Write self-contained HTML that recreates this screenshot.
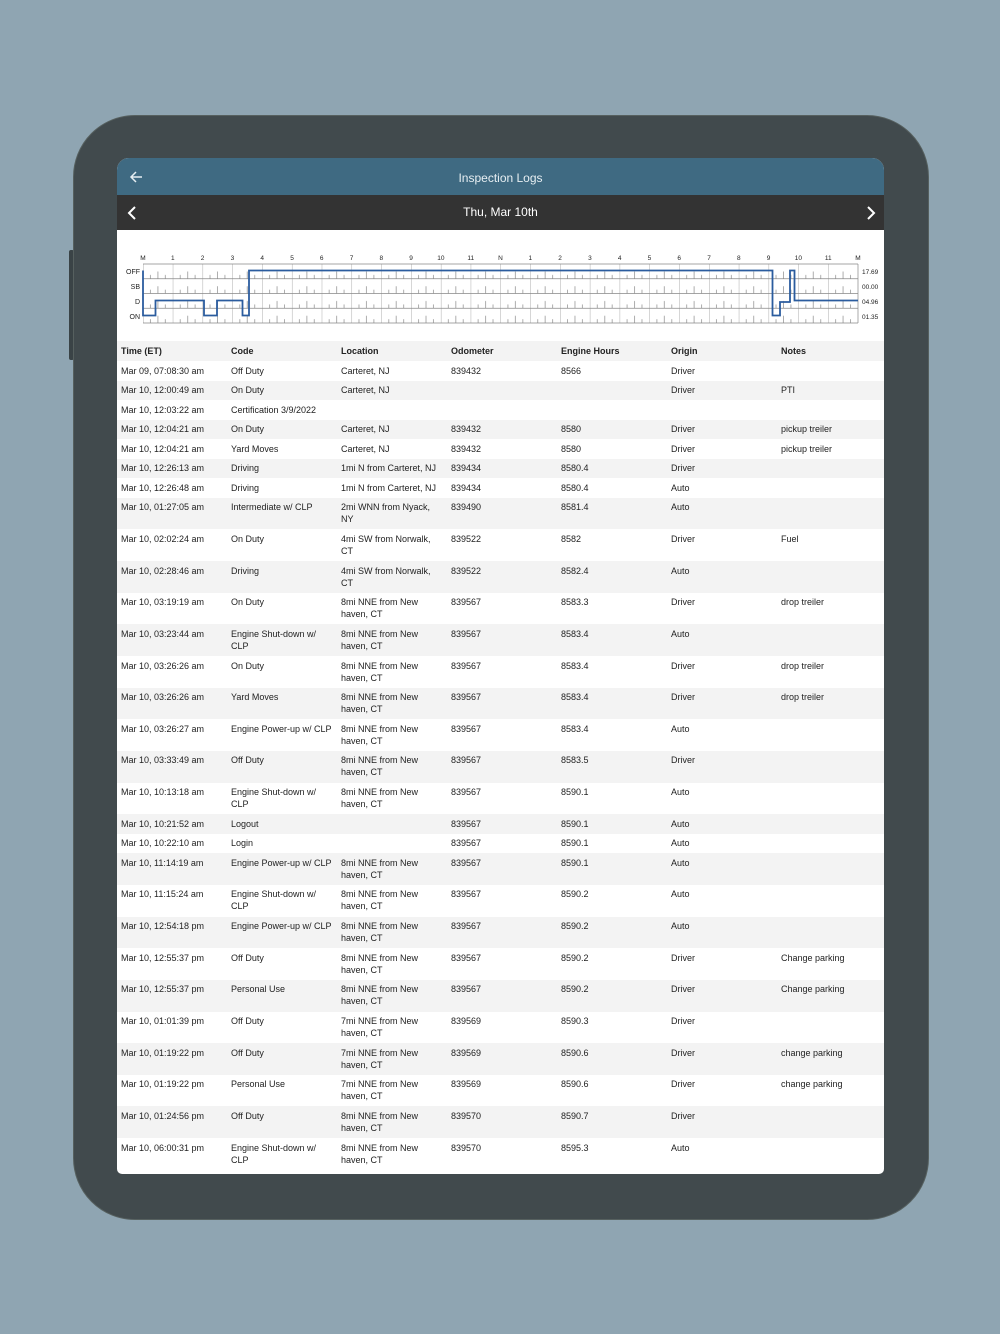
<!DOCTYPE html>
<html><head><meta charset="utf-8"><style>
*{margin:0;padding:0;box-sizing:border-box}
body{width:1000px;height:1334px;background:#8fa5b2;position:relative;font-family:"Liberation Sans",Arial,sans-serif;overflow:hidden}
.dev{position:absolute;left:73px;top:115px;width:856px;height:1105px;background:#414a4d;border-radius:62px;border:1px solid #56605f}
.btn{position:absolute;left:69px;width:5px;background:#3a4346;border-radius:2px}
.scr{position:absolute;left:117px;top:158px;width:767px;height:1016px;background:#fff;border-radius:12px 12px 5px 5px;overflow:hidden}
.tb{height:37px;background:#3f6a82;color:#e6eef2;font-size:12px;text-align:center;line-height:40px;position:relative}
.db{height:35px;background:#333;color:#fff;font-size:12px;text-align:center;line-height:35px;position:relative}
table{border-collapse:collapse;width:767px;font-size:9px;color:#222;position:absolute;top:183px;left:0;table-layout:fixed}
td,th{text-align:left;vertical-align:top;padding:3.5px 0 0 4px;line-height:12px;font-weight:normal}
th{font-weight:bold;padding-top:4px}
tr:nth-child(odd){background:#f3f3f3}
tr{height:19.55px}
tr.d{height:31.65px}
tr.h{height:20px}
col{width:110px}
</style></head><body>
<div class="btn" style="top:250px;height:110px"></div>
<div class="dev"></div>
<div class="scr">
<div class="tb">Inspection Logs
<svg style="position:absolute;left:12px;top:12px" width="14" height="14" viewBox="0 0 14 14"><path d="M13 7H2M7 2L2 7l5 5" stroke="#e6eef2" stroke-width="1.5" fill="none"/></svg></div>
<div class="db">Thu, Mar 10th
<svg style="position:absolute;left:10px;top:11px" width="10" height="14" viewBox="0 0 10 14"><path d="M8 1L2 7l6 6" stroke="#fff" stroke-width="2" fill="none"/></svg>
<svg style="position:absolute;right:8px;top:11px" width="10" height="14" viewBox="0 0 10 14"><path d="M2 1l6 6-6 6" stroke="#fff" stroke-width="2" fill="none"/></svg></div>
<svg style="position:absolute;left:0;top:72px" width="767" height="100" viewBox="117 230 767 100">
<defs><pattern id="p" patternUnits="userSpaceOnUse" x="143" y="264" width="29.79" height="14.75">
<path d="M0 0V14.75M7.45 14.75V11M14.9 14.75V7.5M22.34 14.75V11" stroke="#777" stroke-width="0.6"/>
</pattern></defs>
<rect x="143" y="264" width="715" height="59" fill="url(#p)"/>
<path d="M143 264H858M143 278.75H858M143 293.5H858M143 308.25H858M143 323H858M858 264V323" stroke="#888" stroke-width="0.7"/>
<g font-size="6.5" fill="#222" text-anchor="middle">
<text x="143" y="260">M</text><text x="172.8" y="260">1</text><text x="202.6" y="260">2</text><text x="232.4" y="260">3</text><text x="262.2" y="260">4</text><text x="292" y="260">5</text><text x="321.7" y="260">6</text><text x="351.5" y="260">7</text><text x="381.3" y="260">8</text><text x="411.1" y="260">9</text><text x="440.9" y="260">10</text><text x="470.7" y="260">11</text><text x="500.5" y="260">N</text><text x="530.3" y="260">1</text><text x="560.1" y="260">2</text><text x="589.9" y="260">3</text><text x="619.7" y="260">4</text><text x="649.4" y="260">5</text><text x="679.2" y="260">6</text><text x="709" y="260">7</text><text x="738.8" y="260">8</text><text x="768.6" y="260">9</text><text x="798.4" y="260">10</text><text x="828.2" y="260">11</text><text x="858" y="260">M</text>
</g>
<g font-size="7" fill="#222" text-anchor="end"><text x="140" y="274">OFF</text><text x="140" y="289">SB</text><text x="140" y="304">D</text><text x="140" y="319">ON</text></g>
<g font-size="6.5" fill="#222"><text x="862" y="274">17.69</text><text x="862" y="289">00.00</text><text x="862" y="304">04.96</text><text x="862" y="319">01.35</text></g>
<path d="M143 270.5V315.5H155.5V300.5H204V315.5H217V300.5H242.5V315.5H249V270.5H772.5V315.5H780V302H790V270.5H794.5V300.5H858" stroke="#2b5c9e" stroke-width="1.8" fill="none"/>
</svg>
<table>
<colgroup><col><col><col><col><col><col><col></colgroup>
<tr class="h"><th>Time (ET)</th><th>Code</th><th>Location</th><th>Odometer</th><th>Engine Hours</th><th>Origin</th><th>Notes</th></tr>
<tr><td>Mar 09, 07:08:30 am</td><td>Off Duty</td><td>Carteret, NJ</td><td>839432</td><td>8566</td><td>Driver</td><td></td></tr>
<tr><td>Mar 10, 12:00:49 am</td><td>On Duty</td><td>Carteret, NJ</td><td></td><td></td><td>Driver</td><td>PTI</td></tr>
<tr><td>Mar 10, 12:03:22 am</td><td>Certification 3/9/2022</td><td></td><td></td><td></td><td></td><td></td></tr>
<tr><td>Mar 10, 12:04:21 am</td><td>On Duty</td><td>Carteret, NJ</td><td>839432</td><td>8580</td><td>Driver</td><td>pickup treiler</td></tr>
<tr><td>Mar 10, 12:04:21 am</td><td>Yard Moves</td><td>Carteret, NJ</td><td>839432</td><td>8580</td><td>Driver</td><td>pickup treiler</td></tr>
<tr><td>Mar 10, 12:26:13 am</td><td>Driving</td><td>1mi N from Carteret, NJ</td><td>839434</td><td>8580.4</td><td>Driver</td><td></td></tr>
<tr><td>Mar 10, 12:26:48 am</td><td>Driving</td><td>1mi N from Carteret, NJ</td><td>839434</td><td>8580.4</td><td>Auto</td><td></td></tr>
<tr class="d"><td>Mar 10, 01:27:05 am</td><td>Intermediate w/ CLP</td><td>2mi WNN from Nyack,<br>NY</td><td>839490</td><td>8581.4</td><td>Auto</td><td></td></tr>
<tr class="d"><td>Mar 10, 02:02:24 am</td><td>On Duty</td><td>4mi SW from Norwalk,<br>CT</td><td>839522</td><td>8582</td><td>Driver</td><td>Fuel</td></tr>
<tr class="d"><td>Mar 10, 02:28:46 am</td><td>Driving</td><td>4mi SW from Norwalk,<br>CT</td><td>839522</td><td>8582.4</td><td>Auto</td><td></td></tr>
<tr class="d"><td>Mar 10, 03:19:19 am</td><td>On Duty</td><td>8mi NNE from New<br>haven, CT</td><td>839567</td><td>8583.3</td><td>Driver</td><td>drop treiler</td></tr>
<tr class="d"><td>Mar 10, 03:23:44 am</td><td>Engine Shut-down w/<br>CLP</td><td>8mi NNE from New<br>haven, CT</td><td>839567</td><td>8583.4</td><td>Auto</td><td></td></tr>
<tr class="d"><td>Mar 10, 03:26:26 am</td><td>On Duty</td><td>8mi NNE from New<br>haven, CT</td><td>839567</td><td>8583.4</td><td>Driver</td><td>drop treiler</td></tr>
<tr class="d"><td>Mar 10, 03:26:26 am</td><td>Yard Moves</td><td>8mi NNE from New<br>haven, CT</td><td>839567</td><td>8583.4</td><td>Driver</td><td>drop treiler</td></tr>
<tr class="d"><td>Mar 10, 03:26:27 am</td><td>Engine Power-up w/ CLP</td><td>8mi NNE from New<br>haven, CT</td><td>839567</td><td>8583.4</td><td>Auto</td><td></td></tr>
<tr class="d"><td>Mar 10, 03:33:49 am</td><td>Off Duty</td><td>8mi NNE from New<br>haven, CT</td><td>839567</td><td>8583.5</td><td>Driver</td><td></td></tr>
<tr class="d"><td>Mar 10, 10:13:18 am</td><td>Engine Shut-down w/<br>CLP</td><td>8mi NNE from New<br>haven, CT</td><td>839567</td><td>8590.1</td><td>Auto</td><td></td></tr>
<tr><td>Mar 10, 10:21:52 am</td><td>Logout</td><td></td><td>839567</td><td>8590.1</td><td>Auto</td><td></td></tr>
<tr><td>Mar 10, 10:22:10 am</td><td>Login</td><td></td><td>839567</td><td>8590.1</td><td>Auto</td><td></td></tr>
<tr class="d"><td>Mar 10, 11:14:19 am</td><td>Engine Power-up w/ CLP</td><td>8mi NNE from New<br>haven, CT</td><td>839567</td><td>8590.1</td><td>Auto</td><td></td></tr>
<tr class="d"><td>Mar 10, 11:15:24 am</td><td>Engine Shut-down w/<br>CLP</td><td>8mi NNE from New<br>haven, CT</td><td>839567</td><td>8590.2</td><td>Auto</td><td></td></tr>
<tr class="d"><td>Mar 10, 12:54:18 pm</td><td>Engine Power-up w/ CLP</td><td>8mi NNE from New<br>haven, CT</td><td>839567</td><td>8590.2</td><td>Auto</td><td></td></tr>
<tr class="d"><td>Mar 10, 12:55:37 pm</td><td>Off Duty</td><td>8mi NNE from New<br>haven, CT</td><td>839567</td><td>8590.2</td><td>Driver</td><td>Change parking</td></tr>
<tr class="d"><td>Mar 10, 12:55:37 pm</td><td>Personal Use</td><td>8mi NNE from New<br>haven, CT</td><td>839567</td><td>8590.2</td><td>Driver</td><td>Change parking</td></tr>
<tr class="d"><td>Mar 10, 01:01:39 pm</td><td>Off Duty</td><td>7mi NNE from New<br>haven, CT</td><td>839569</td><td>8590.3</td><td>Driver</td><td></td></tr>
<tr class="d"><td>Mar 10, 01:19:22 pm</td><td>Off Duty</td><td>7mi NNE from New<br>haven, CT</td><td>839569</td><td>8590.6</td><td>Driver</td><td>change parking</td></tr>
<tr class="d"><td>Mar 10, 01:19:22 pm</td><td>Personal Use</td><td>7mi NNE from New<br>haven, CT</td><td>839569</td><td>8590.6</td><td>Driver</td><td>change parking</td></tr>
<tr class="d"><td>Mar 10, 01:24:56 pm</td><td>Off Duty</td><td>8mi NNE from New<br>haven, CT</td><td>839570</td><td>8590.7</td><td>Driver</td><td></td></tr>
<tr class="d"><td>Mar 10, 06:00:31 pm</td><td>Engine Shut-down w/<br>CLP</td><td>8mi NNE from New<br>haven, CT</td><td>839570</td><td>8595.3</td><td>Auto</td><td></td></tr>
</table>
</div>
</body></html>
